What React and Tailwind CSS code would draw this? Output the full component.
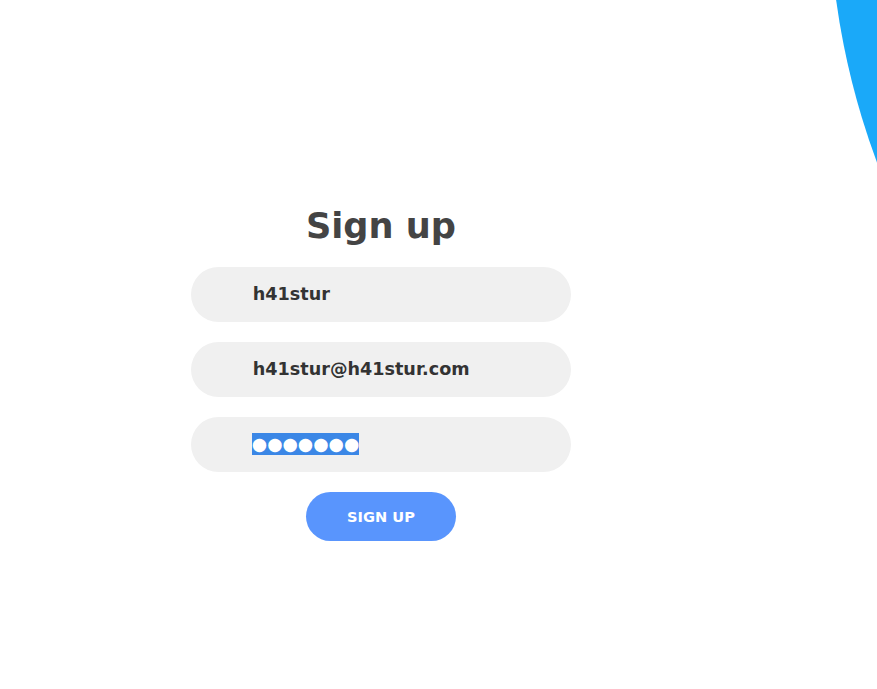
export default function App() {
  return (
    <div className="relative min-h-screen w-full overflow-hidden bg-white font-['DejaVu_Sans',sans-serif]">
      {/* big blue circle peeking in at the top right */}
      <div className="absolute left-[829px] top-[-868px] h-[1528px] w-[1528px] rounded-full bg-[#1aa9f9]" />

      <div className="relative flex w-[762px] flex-col items-center pt-[205px]">
        <h2 className="mb-[10px] text-[35.2px] font-bold leading-[42px] text-[#444]">Sign up</h2>

        <div className="my-[10px] grid h-[55px] w-[380px] grid-cols-[15%_85%] rounded-full bg-[#f0f0f0] px-[4px]">
          <span />
          <input
            readOnly
            defaultValue="h41stur"
            className="bg-transparent pl-[2px] text-[17.6px] font-semibold text-[#333] outline-none"
          />
        </div>

        <div className="my-[10px] grid h-[55px] w-[380px] grid-cols-[15%_85%] rounded-full bg-[#f0f0f0] px-[4px]">
          <span />
          <input
            readOnly
            defaultValue="h41stur@h41stur.com"
            className="bg-transparent pl-[2px] text-[17.6px] font-semibold text-[#333] outline-none"
          />
        </div>

        <div className="my-[10px] grid h-[55px] w-[380px] grid-cols-[15%_85%] rounded-full bg-[#f0f0f0] px-[4px]">
          <span />
          <div className="flex items-center pb-[1px] pl-[1px]">
            <span className="bg-[#3b87e6] text-[17.6px] font-semibold leading-[22px] text-white">●●●●●●●</span>
          </div>
        </div>

        <button className="my-[10px] h-[49px] w-[150px] rounded-full bg-[#5995fd] text-[14.6px] font-semibold uppercase text-white">
          Sign up
        </button>
      </div>
    </div>
  );
}
